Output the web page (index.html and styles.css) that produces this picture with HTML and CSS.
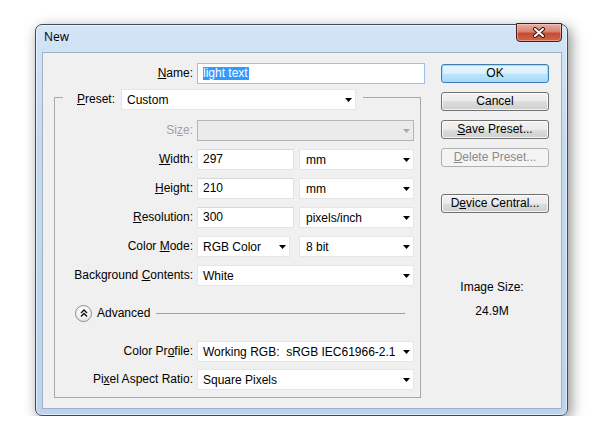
FILE: index.html
```html
<!DOCTYPE html>
<html>
<head>
<meta charset="utf-8">
<link rel="stylesheet" href="styles.css">
</head>
<body>
<div class="window">
  <div class="titlebar">
    <span class="title">New</span>
    <div class="close">
      <svg width="14" height="11" viewBox="0 0 14 11">
        <path d="M3 2 L11 9 M11 2 L3 9" stroke="#3b1710" stroke-width="4" stroke-linecap="round" fill="none"/>
        <path d="M3 2 L11 9 M11 2 L3 9" stroke="#ffffff" stroke-width="2" stroke-linecap="round" fill="none"/>
      </svg>
    </div>
  </div>
  <div class="client">
    <div class="main">
      <div class="name-row">
        <span class="lbl"><u>N</u>ame:</span>
        <div class="field name-field"><span class="sel">light text</span></div>
      </div>
      <fieldset class="group">
        <legend class="legend">
          <div class="legend-in">
            <span class="lbl"><u>P</u>reset:</span>
            <div class="dd preset-dd"><span>Custom</span><i class="arrow"></i></div>
          </div>
        </legend>
        <div class="rows">
          <span class="lbl disabled">Si<u>z</u>e:</span>
          <div class="dd off"><span></span><i class="arrow"></i></div>

          <span class="lbl"><u>W</u>idth:</span>
          <div class="pair"><div class="field num">297</div><div class="dd unit"><span>mm</span><i class="arrow"></i></div></div>

          <span class="lbl"><u>H</u>eight:</span>
          <div class="pair"><div class="field num">210</div><div class="dd unit"><span>mm</span><i class="arrow"></i></div></div>

          <span class="lbl"><u>R</u>esolution:</span>
          <div class="pair"><div class="field num">300</div><div class="dd unit"><span>pixels/inch</span><i class="arrow"></i></div></div>

          <span class="lbl">Color <u>M</u>ode:</span>
          <div class="pair mode"><div class="dd cmode"><span>RGB Color</span><i class="arrow"></i></div><div class="dd unit"><span>8 bit</span><i class="arrow"></i></div></div>

          <span class="lbl">Background <u>C</u>ontents:</span>
          <div class="dd"><span>White</span><i class="arrow"></i></div>
        </div>
        <div class="adv">
          <div class="circle">
            <svg width="8" height="8" viewBox="0 0 8 8">
              <polyline points="1,4 4,1 7,4" fill="none" stroke="#111" stroke-width="1.4"/>
              <polyline points="1,7.5 4,4.5 7,7.5" fill="none" stroke="#111" stroke-width="1.4"/>
            </svg>
          </div>
          <span class="adv-text">Advanced</span>
          <div class="adv-line"></div>
        </div>
        <div class="rows rows2">
          <span class="lbl">Color Pr<u>o</u>file:</span>
          <div class="dd"><span class="pre">Working RGB:  sRGB IEC61966-2.1</span><i class="arrow"></i></div>

          <span class="lbl">Pi<u>x</u>el Aspect Ratio:</span>
          <div class="dd"><span>Square Pixels</span><i class="arrow"></i></div>
        </div>
      </fieldset>
    </div>
    <div class="side">
      <div class="btn default">OK</div>
      <div class="btn">Cancel</div>
      <div class="btn"><u>S</u>ave Preset...</div>
      <div class="btn disabled"><u>D</u>elete Preset...</div>
      <div class="btn device">D<u>e</u>vice Central...</div>
      <div class="info">
        <div>Image Size:</div>
        <div>24.9M</div>
      </div>
    </div>
  </div>
</div>
</body>
</html>
```
FILE: styles.css
```css
* { box-sizing: border-box; }

body {
  margin: 0;
  padding: 24px 0 0 35px;
  background: #ffffff;
  font: 12px "Liberation Sans", Arial, sans-serif;
  color: #000;
}

u { text-decoration: underline; text-underline-offset: 1px; }

.window {
  width: 533px;
  height: 392px;
  border: 1px solid #3e4b5b;
  border-radius: 7px;
  background: linear-gradient(180deg, #d3e5f7 0%, #c5daf1 30%, #bcd4ee 100%);
  box-shadow: inset 0 0 0 1px rgba(255,255,255,0.55), 3px 4px 14px rgba(0,0,0,0.45);
  display: flex;
  flex-direction: column;
}

.titlebar {
  height: 27px;
  display: flex;
  justify-content: space-between;
  align-items: flex-start;
  padding-left: 8px;
}

.title {
  font: 12px "Open Sans", "Liberation Sans", sans-serif;
  line-height: 24px;
  color: #000;
}

.close {
  width: 46px;
  height: 19px;
  margin: -2px 5px 0 0;
  border: 1px solid #4a1c16;
  border-radius: 0 0 4px 4px;
  background: linear-gradient(180deg, #e9b0a5 0%, #d9826f 45%, #c44a32 55%, #d0684e 100%);
  box-shadow: inset 0 0 0 1px rgba(255,220,210,0.45);
  display: flex;
  align-items: center;
  justify-content: center;
}

.client {
  flex: 1;
  margin: 0 5px 6px 6px;
  background: #f0f0f0;
  border: 1px solid #9fb2c7;
  display: flex;
  padding: 10px 0 0 11px;
}

.main { width: 371px; }

.lbl {
  text-align: right;
  line-height: 21px;
  white-space: nowrap;
  color: #000;
}
.lbl.disabled { color: #a0a0a0; }

.name-row {
  display: grid;
  grid-template-columns: 139px 228px;
  column-gap: 4px;
  height: 21px;
}

.field {
  height: 21px;
  background: #fff;
  border: 1px solid #e0e3e8;
  border-top-color: #d4d7dc;
  padding-left: 5px;
  line-height: 19px;
  white-space: nowrap;
}

.name-field {
  border-color: #9cc0e4;
  display: flex;
  align-items: center;
}

.sel {
  display: inline-block;
  background: #3399ff;
  color: #fff;
  line-height: 13px;
  padding: 0 1px 0 0;
}

.group {
  margin: 0;
  padding: 0 0 7px 0;
  width: 367px;
  min-width: 0;
  border: 1px solid #a9a9a9;
}

.legend {
  margin-left: 8px;
  padding: 5px 7px 0 14px;
}

.legend-in {
  display: flex;
  align-items: center;
  gap: 6px;
}

.dd {
  height: 21px;
  background: #fff;
  border: 1px solid #e6e6e6;
  display: flex;
  align-items: center;
  justify-content: space-between;
  padding: 0 3px 0 5px;
  white-space: nowrap;
}

.dd .pre { white-space: pre; }

.preset-dd { width: 235px; }

.dd.off {
  background: #ebebeb;
  border-color: #b4b4b4;
}
.dd.off .arrow { background: #a8a8a8; }

.arrow {
  width: 7px;
  height: 4px;
  background: #000;
  clip-path: polygon(0 0, 100% 0, 50% 100%);
  flex: none;
  margin-top: 1px;
}

.rows {
  display: grid;
  grid-template-columns: 138px 217px;
  column-gap: 4px;
  row-gap: 8px;
  grid-auto-rows: 21px;
  padding-top: 10px;
}

.rows2 {
  padding-top: 0;
  margin-top: 18px;
  row-gap: 7px;
}

.pair {
  display: flex;
  gap: 5px;
}
.pair .num { width: 97px; }
.pair .unit { width: 115px; padding-left: 6px; }
.pair.mode { gap: 9px; }
.pair .cmode { width: 93px; }

.adv {
  display: flex;
  align-items: center;
  height: 20px;
  margin: 17px 15px 0 20px;
}

.circle {
  width: 17px;
  height: 17px;
  border-radius: 50%;
  border: 1px solid #8d8d8d;
  background: radial-gradient(circle at 50% 35%, #ffffff 0%, #f4f4f4 50%, #dcdcdc 100%);
  display: flex;
  align-items: center;
  justify-content: center;
  flex: none;
}

.adv-text { margin-left: 5px; }

.adv-line {
  flex: 1;
  height: 1px;
  background: #a0a0a0;
  margin-left: 6px;
}

.side {
  margin-left: 16px;
  width: 108px;
  display: flex;
  flex-direction: column;
  gap: 9px;
  padding-top: 1px;
}

.btn {
  height: 19px;
  border: 1px solid #707070;
  border-radius: 3px;
  background: linear-gradient(180deg, #f2f2f2 0%, #ebebeb 50%, #dddddd 50%, #cfcfcf 100%);
  box-shadow: inset 0 0 0 1px rgba(255,255,255,0.75);
  text-align: center;
  line-height: 17px;
  white-space: nowrap;
}

.btn.default {
  border-color: #3c7fb1;
  background: linear-gradient(180deg, #eaf6fd 0%, #d9f0fc 50%, #bee6fd 50%, #a7d9f5 100%);
  box-shadow: inset 0 0 0 1px #9fdcf8;
}

.btn.disabled {
  border-color: #adb2b5;
  background: #f4f4f4;
  box-shadow: none;
  color: #8a8a8a;
}

.btn.device { margin-top: 18px; }

.info {
  margin-top: 53px;
  padding-right: 6px;
  text-align: center;
  line-height: 24px;
}
```
